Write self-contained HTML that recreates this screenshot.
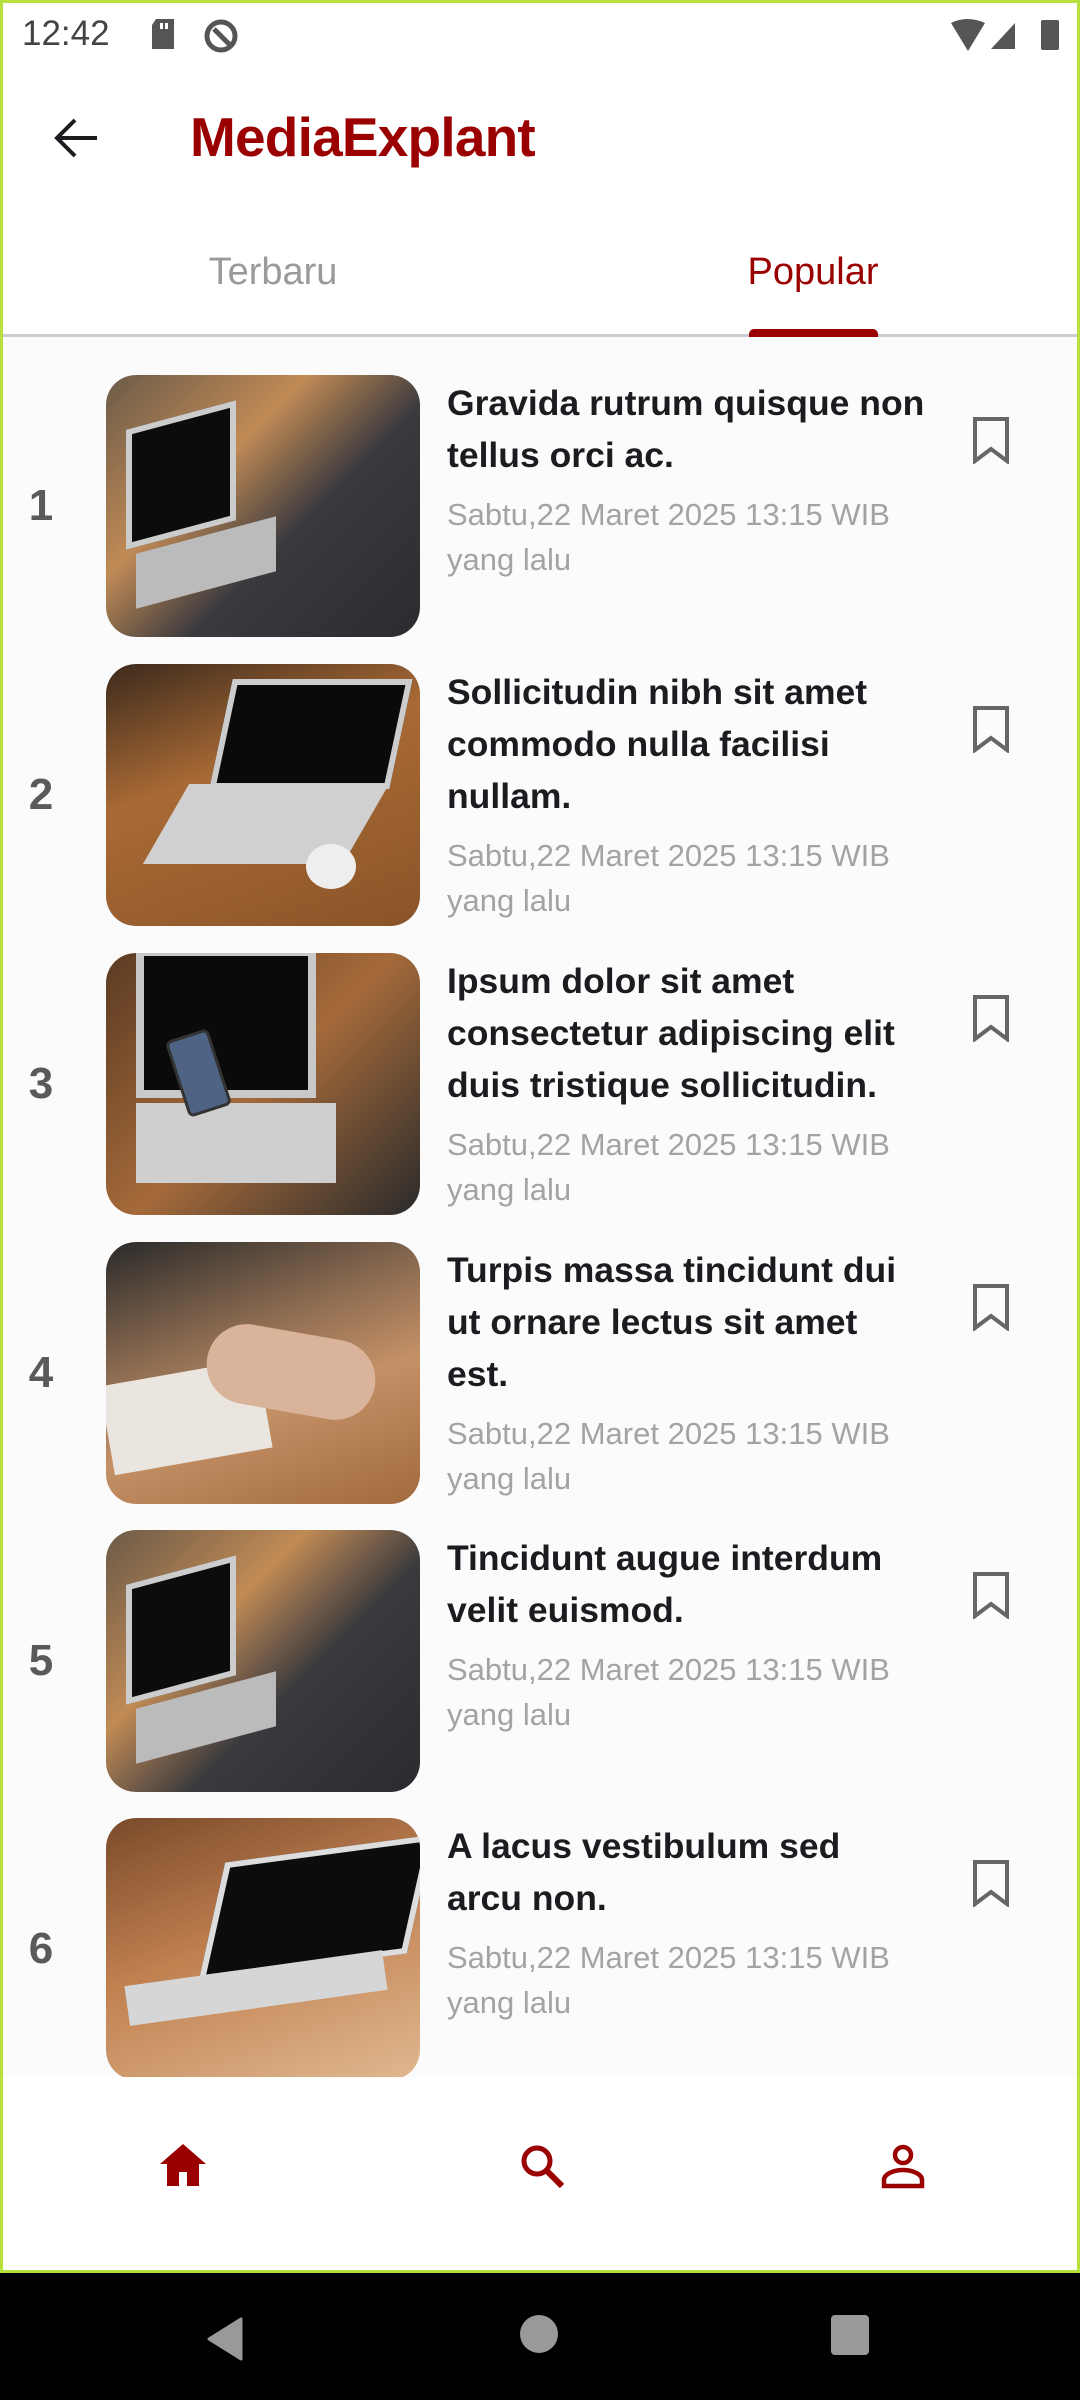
<!DOCTYPE html>
<html><head><meta charset="utf-8"><style>
*{margin:0;padding:0;box-sizing:border-box}
body{width:1080px;height:2400px;overflow:hidden;font-family:"Liberation Sans",sans-serif;background:#000;position:relative}
.app{position:absolute;left:0;top:0;width:1080px;height:2273px;background:#fcfbfc;border:3px solid #b8e03c;overflow:hidden}
.hdr{position:absolute;left:0;top:0;width:1080px;height:333px;background:#fff}
.abs{position:absolute}
.time{left:19px;top:11px;font-size:35px;color:#444}
.title{left:187px;top:102px;font-size:55px;font-weight:bold;color:#9b0000;letter-spacing:-0.8px}
.tab{top:248px;font-size:38px;transform:translateX(-50%)}
.divider{left:0;top:331px;width:1080px;height:3px;background:#cfcbd3}
.ind{left:746px;top:326px;width:129px;height:8px;background:#9b0000;border-radius:5px 5px 0 0}
.num{left:0;width:76px;text-align:center;font-size:44px;font-weight:bold;color:#5a5a5a}
.img{left:103px;width:314px;height:262px;border-radius:30px;overflow:hidden}
.t{left:444px;font-size:35.5px;line-height:52px;font-weight:bold;color:#1c1b1f;white-space:nowrap}
.d{font-size:31px;line-height:45px;color:#a3a3a3;font-weight:normal;margin-top:11px}
.bm{left:967px}
.nav{left:0;top:2074px;width:1080px;height:196px;background:#fff}
.sys{position:absolute;left:0;top:2273px;width:1080px;height:127px;background:#000}
</style></head><body>
<div class="app">
<div class="hdr">
 <div class="abs time">12:42</div>
 <svg class="abs" style="left:145px;top:14px" width="30" height="34" viewBox="0 0 30 34"><path d="M8 2h18v30H4V8z" fill="#555"/><rect x="12" y="6" width="3" height="6" fill="#fff"/><rect x="17" y="6" width="3" height="6" fill="#fff"/></svg>
 <svg class="abs" style="left:198px;top:14px" width="40" height="38" viewBox="0 0 40 38"><circle cx="20" cy="19" r="14" fill="none" stroke="#555" stroke-width="5"/><path d="M13 12l16 16" stroke="#555" stroke-width="5"/></svg>
 <svg class="abs" style="left:946px;top:14px" width="120" height="36" viewBox="0 0 120 36"><path d="M2 6q16-8 34 0L19 34z" fill="#555"/><path d="M42 32L66 6v26z" fill="#555"/><rect x="92" y="3" width="18" height="30" rx="2" fill="#555"/></svg>
 <svg class="abs" style="left:50px;top:114px" width="46" height="42" viewBox="0 0 46 42"><path d="M44 21H5M22 3L4 21l18 18" fill="none" stroke="#1c1b1f" stroke-width="4"/></svg>
 <div class="abs title">MediaExplant</div>
 <div class="abs tab" style="left:270px;color:#9a9a9a">Terbaru</div>
 <div class="abs tab" style="left:810px;color:#9b0000">Popular</div>
 <div class="abs divider"></div>
 <div class="abs ind"></div>
</div>

<div class="abs num" style="top:478px">1</div>
<div class="abs img" style="top:372px;background:linear-gradient(135deg,#6b5a48 0%,#c08a55 35%,#3a3a3e 60%,#2b2b30 100%)"><div class="abs" style="left:20px;top:40px;width:110px;height:120px;background:#0c0c0c;border:6px solid #ccc;transform:skewY(-15deg)"></div><div class="abs" style="left:30px;top:160px;width:140px;height:55px;background:#bbb;transform:skewY(-15deg)"></div></div>
<div class="abs t" style="top:374px">Gravida rutrum quisque non<br>tellus orci ac.<div class="d">Sabtu,22 Maret 2025 13:15 WIB<br>yang lalu</div></div>
<svg class="abs bm" style="top:413px" width="42" height="48" viewBox="0 0 42 48"><path d="M5 3h32v42L21 33 5 45z" fill="none" stroke="#666" stroke-width="4"/></svg>

<div class="abs num" style="top:767px">2</div>
<div class="abs img" style="top:661px;background:linear-gradient(160deg,#3c2a1c 0%,#a96a35 40%,#8a5428 100%)"><div class="abs" style="left:115px;top:15px;width:180px;height:110px;background:#0a0a0a;border:6px solid #ccc;transform:skewX(-12deg)"></div><div class="abs" style="left:60px;top:120px;width:200px;height:80px;background:#d0d0d0;transform:skewX(-30deg)"></div><div class="abs" style="left:200px;top:180px;width:50px;height:45px;background:#eee;border-radius:50%"></div></div>
<div class="abs t" style="top:663px">Sollicitudin nibh sit amet<br>commodo nulla facilisi<br>nullam.<div class="d">Sabtu,22 Maret 2025 13:15 WIB<br>yang lalu</div></div>
<svg class="abs bm" style="top:702px" width="42" height="48" viewBox="0 0 42 48"><path d="M5 3h32v42L21 33 5 45z" fill="none" stroke="#666" stroke-width="4"/></svg>

<div class="abs num" style="top:1056px">3</div>
<div class="abs img" style="top:950px;background:linear-gradient(135deg,#5a3a22 0%,#a56a3a 50%,#2a2a2a 100%)"><div class="abs" style="left:30px;top:-5px;width:180px;height:150px;background:#0a0a0a;border:8px solid #c9c9c9"></div><div class="abs" style="left:30px;top:150px;width:200px;height:80px;background:#cfcfcf"></div><div class="abs" style="left:70px;top:80px;width:45px;height:80px;background:#4f6485;border:3px solid #333;border-radius:6px;transform:rotate(-18deg)"></div></div>
<div class="abs t" style="top:952px">Ipsum dolor sit amet<br>consectetur adipiscing elit<br>duis tristique sollicitudin.<div class="d">Sabtu,22 Maret 2025 13:15 WIB<br>yang lalu</div></div>
<svg class="abs bm" style="top:991px" width="42" height="48" viewBox="0 0 42 48"><path d="M5 3h32v42L21 33 5 45z" fill="none" stroke="#666" stroke-width="4"/></svg>

<div class="abs num" style="top:1345px">4</div>
<div class="abs img" style="top:1239px;background:linear-gradient(160deg,#2a2a2a 0%,#8a6a50 35%,#c49066 60%,#a06a3c 100%)"><div class="abs" style="left:0;top:130px;width:160px;height:90px;background:#eae6df;transform:rotate(-10deg)"></div><div class="abs" style="left:100px;top:90px;width:170px;height:80px;background:#d9b49a;border-radius:40px;transform:rotate(10deg)"></div></div>
<div class="abs t" style="top:1241px">Turpis massa tincidunt dui<br>ut ornare lectus sit amet<br>est.<div class="d">Sabtu,22 Maret 2025 13:15 WIB<br>yang lalu</div></div>
<svg class="abs bm" style="top:1280px" width="42" height="48" viewBox="0 0 42 48"><path d="M5 3h32v42L21 33 5 45z" fill="none" stroke="#666" stroke-width="4"/></svg>

<div class="abs num" style="top:1633px">5</div>
<div class="abs img" style="top:1527px;background:linear-gradient(135deg,#6b5a48 0%,#c08a55 35%,#3a3a3e 60%,#2b2b30 100%)"><div class="abs" style="left:20px;top:40px;width:110px;height:120px;background:#0c0c0c;border:6px solid #ccc;transform:skewY(-15deg)"></div><div class="abs" style="left:30px;top:160px;width:140px;height:55px;background:#bbb;transform:skewY(-15deg)"></div></div>
<div class="abs t" style="top:1529px">Tincidunt augue interdum<br>velit euismod.<div class="d">Sabtu,22 Maret 2025 13:15 WIB<br>yang lalu</div></div>
<svg class="abs bm" style="top:1568px" width="42" height="48" viewBox="0 0 42 48"><path d="M5 3h32v42L21 33 5 45z" fill="none" stroke="#666" stroke-width="4"/></svg>

<div class="abs num" style="top:1921px">6</div>
<div class="abs img" style="top:1815px;background:linear-gradient(160deg,#7a4a2a 0%,#c08050 45%,#e0b890 100%)"><div class="abs" style="left:110px;top:30px;width:200px;height:120px;background:#0c0c0c;border:6px solid #ddd;transform:skewX(-20deg) rotate(-8deg)"></div><div class="abs" style="left:20px;top:150px;width:260px;height:40px;background:#d6d6d6;transform:rotate(-8deg)"></div></div>
<div class="abs t" style="top:1817px">A lacus vestibulum sed<br>arcu non.<div class="d">Sabtu,22 Maret 2025 13:15 WIB<br>yang lalu</div></div>
<svg class="abs bm" style="top:1856px" width="42" height="48" viewBox="0 0 42 48"><path d="M5 3h32v42L21 33 5 45z" fill="none" stroke="#666" stroke-width="4"/></svg>

<div class="abs nav">
 <svg class="abs" style="left:155px;top:65px" width="50" height="46" viewBox="0 0 50 46"><path d="M25 2L2 22h7v22h12V30h8v14h12V22h7z" fill="#9b0000"/></svg>
 <svg class="abs" style="left:515px;top:65px" width="50" height="50" viewBox="0 0 50 50"><circle cx="19" cy="19" r="13" fill="none" stroke="#9b0000" stroke-width="5"/><path d="M28 28l16 16" stroke="#9b0000" stroke-width="6"/></svg>
 <svg class="abs" style="left:876px;top:65px" width="48" height="48" viewBox="0 0 48 48"><circle cx="24" cy="13" r="8" fill="none" stroke="#9b0000" stroke-width="4.5"/><path d="M5 44v-6c0-6 10-10 19-10s19 4 19 10v6z" fill="none" stroke="#9b0000" stroke-width="4.5"/></svg>
</div>
</div>
<div class="sys">
 <svg class="abs" style="left:205px;top:44px" width="40" height="44" viewBox="0 0 40 44"><path d="M36 2v40L4 22z" fill="#999" stroke="#999" stroke-width="3" stroke-linejoin="round"/></svg>
 <div class="abs" style="left:520px;top:42px;width:38px;height:38px;border-radius:50%;background:#999"></div>
 <div class="abs" style="left:831px;top:42px;width:38px;height:40px;border-radius:4px;background:#999"></div>
</div>
</body></html>
